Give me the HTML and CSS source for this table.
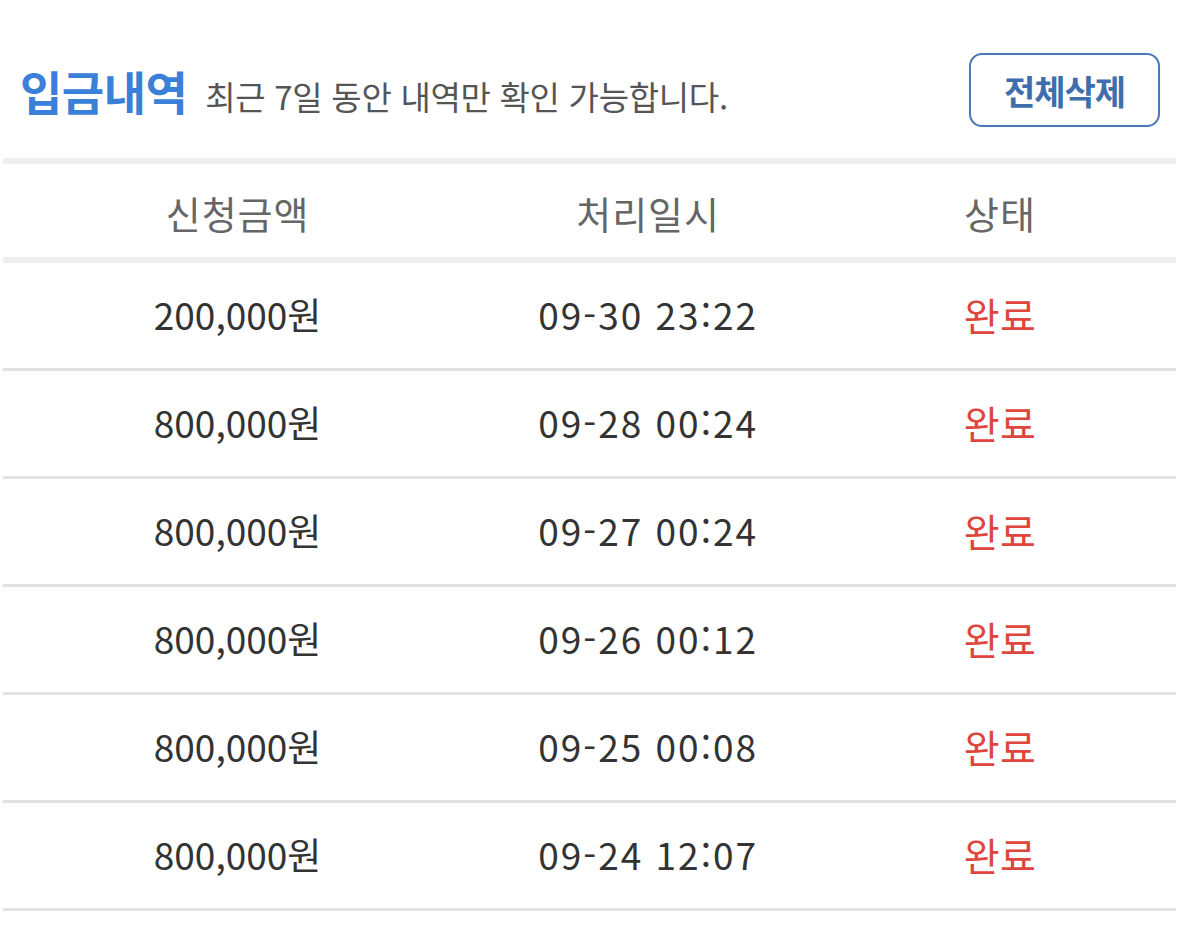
FILE: index.html
```html
<!DOCTYPE html>
<html lang="ko">
<head>
<meta charset="utf-8">
<title>입금내역</title>
<link rel="stylesheet" href="styles.css">
</head>
<body>
<div class="page">
  <div class="top">
    <div class="heading">
      <h1 class="title">입금내역</h1>
      <span class="sub">최근 7일 동안 내역만 확인 가능합니다.</span>
    </div>
    <button class="del">전체삭제</button>
  </div>
  <div class="table">
    <div class="row head">
      <div class="c1">신청금액</div>
      <div class="c2">처리일시</div>
      <div class="c3">상태</div>
    </div>
    <div class="row"><div class="c1">200,000원</div><div class="c2">09-30 23:22</div><div class="c3 done">완료</div></div>
    <div class="row"><div class="c1">800,000원</div><div class="c2">09-28 00:24</div><div class="c3 done">완료</div></div>
    <div class="row"><div class="c1">800,000원</div><div class="c2">09-27 00:24</div><div class="c3 done">완료</div></div>
    <div class="row"><div class="c1">800,000원</div><div class="c2">09-26 00:12</div><div class="c3 done">완료</div></div>
    <div class="row"><div class="c1">800,000원</div><div class="c2">09-25 00:08</div><div class="c3 done">완료</div></div>
    <div class="row"><div class="c1">800,000원</div><div class="c2">09-24 12:07</div><div class="c3 done">완료</div></div>
  </div>
</div>
</body>
</html>
```
FILE: styles.css
```css
* { box-sizing: border-box; }
html, body { margin: 0; padding: 0; background: #fff; }
body {
  font-family: "Noto Sans CJK KR", "Noto Sans", sans-serif;
  color: #333;
}
.page {
  padding: 0 3px;
}
.top {
  height: 164px;
  display: flex;
  align-items: center;
  justify-content: space-between;
  padding: 22px 16px 0 17px;
  border-bottom: 6px solid #eeeeee;
}
.heading {
  display: flex;
  align-items: baseline;
  gap: 18px;
}
.title {
  margin: 0;
  font-size: 46px;
  font-weight: 700;
  color: #3a7fd8;
  letter-spacing: -0.5px;
}
.sub {
  font-size: 33px;
  color: #555;
  letter-spacing: -0.3px;
}
.del {
  width: 191px;
  height: 74px;
  border: 2px solid #4a79b6;
  border-radius: 13px;
  background: #fff;
  color: #3f6ead;
  font-family: "Noto Sans CJK KR", sans-serif;
  font-size: 34px;
  font-weight: 700;
  letter-spacing: -1px;
  padding: 0;
}
.row {
  display: grid;
  grid-template-columns: 40% 30% 30%;
  align-items: center;
  height: 108px;
  border-bottom: 3px solid #e1e1e1;
  font-size: 37px;
  color: #333;
  padding-bottom: 4px;
}
.row > div { text-align: center; }
.row .c2 { letter-spacing: 2px; }
.row .c3 { font-size: 39px; letter-spacing: 0.5px; }
.row.head {
  height: 99px;
  border-bottom: 6px solid #eeeeee;
  font-size: 38px;
  letter-spacing: 1px;
  color: #666;
  padding-bottom: 0;
  padding-top: 4px;
}
.row.head .c2 { letter-spacing: 1px; }
.row.head .c3 { font-size: 38px; letter-spacing: 1px; }
.done { color: #e0463d; }
```
